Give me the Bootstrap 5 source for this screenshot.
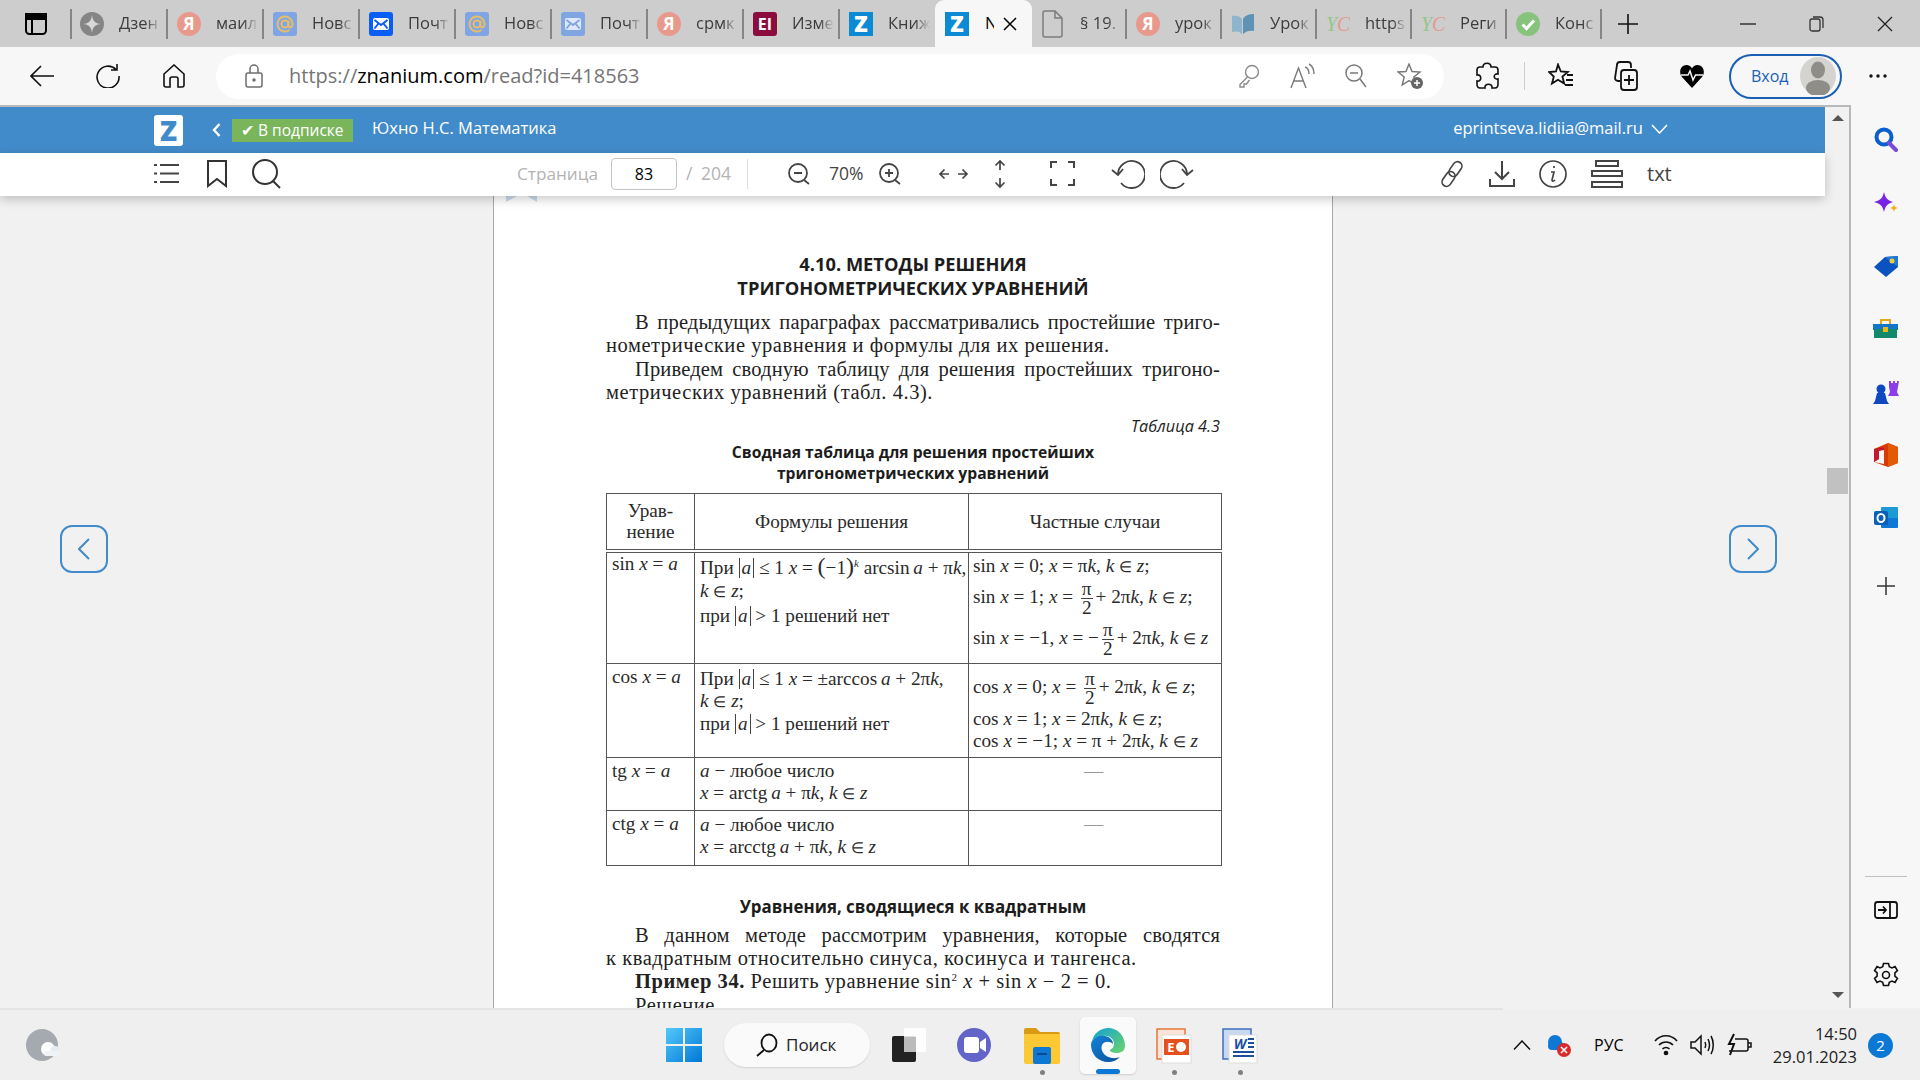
<!DOCTYPE html>
<html lang="ru">
<head>
  <meta charset="UTF-8" />
  <title>Znanium - Reader</title>
  <link href="https://cdn.jsdelivr.net/npm/bootstrap@5.3.0/dist/css/bootstrap.min.css" rel="stylesheet" />
  <style>
    html, body { height: 1080px; overflow: hidden; }
    body { font-family: "Open Sans", "Noto Sans", sans-serif; background: #f1f1f1; color: #000; }
    svg { display: block; flex: none; }
    .ml9{margin-left:9px}.ml11{margin-left:11px}.ml12{margin-left:12px}.ml14{margin-left:14px}.ml15{margin-left:15px}.ml16{margin-left:16px}.ml19{margin-left:19px}.ml20{margin-left:20px}.ml21{margin-left:21px}.ml22{margin-left:22px}.ml23{margin-left:23px}.ml24{margin-left:24px}.ml25{margin-left:25px}.ml26{margin-left:26px}.ml27{margin-left:27px}.ml29{margin-left:29px}.ml30{margin-left:30px}.ml31{margin-left:31px}.ml32{margin-left:32px}.ml36{margin-left:36px}.ml37{margin-left:37px}.ml40{margin-left:40px}.ml42{margin-left:42px}.ml43{margin-left:43px}.ml44{margin-left:44px}.ml52{margin-left:52px}.ml53{margin-left:53px}.ml102{margin-left:102px}.ml154{margin-left:154px}.ml235{margin-left:235px}.ml245{margin-left:245px}.ml255{margin-left:255px}.ml604{margin-left:604px}.mlclock{margin-left:-15px}

    /* browser chrome */
    .tabrow { height: 47px; background: #cdcdcd; }
    .tabcell { width: 96px; height: 30px; border-right: 2px solid #858585; padding-left: 9px; flex: none; }
    .tabcell.first { border-left: 2px solid #858585; width: 98px; padding-left: 8px; }
    .tabcell.nosep { border-right: 0; width: 95px; }
    .tabcell.after { width: 95px; }
    .tabtitle { width: 42px; margin-left: 15px; font-size: 16.5px; white-space: nowrap; overflow: hidden; color: #3c3c3c; -webkit-mask-image: linear-gradient(90deg, #000 65%, transparent); mask-image: linear-gradient(90deg, #000 65%, transparent); }
    .tabactive { width: 97px; height: 47px; background: #f7f7f7; border-radius: 9px 9px 0 0; padding-left: 10px; flex: none; }
    .tabactive .tabtitle { width: 9px; margin-left: 16px; color: #000; -webkit-mask-image: none; mask-image: none; }
    .addrbar { height: 58px; background: #f7f7f7; }
    .addrfield { width: 1228px; height: 45px; background: #fff; border-radius: 23px; }
    .urltext { font-size: 20px; color: #757575; }
    .urltext b { font-weight: 400; color: #000; }
    .sepline { width: 1px; height: 28px; background: #cfcfcf; }
    .loginpill { width: 113px; height: 45px; border: 2px solid #1a5fb4; border-radius: 23px; color: #1a5fb4; font-size: 16px; padding-left: 20px; }
    .mainrow { height: 903px; }
    .viewport { width: 1851px; border-top: 2px solid #b9b9b9; border-right: 2px solid #b9b9b9; background: #f1f1f1; }
    .readcol { width: 1825px; flex: none; }
    .bluebar { height: 46px; background: #428bca; color: #fff; padding-left: 154px; }
    .zlogo { width: 29px; height: 31px; background: #fff; border-radius: 3px; color: #428bca; font-weight: 800; font-size: 28px; line-height: 31px; text-align: center; }
    .subbadge { width: 121px; height: 23px; margin-left: 11px; background: #7ab55c; font-size: 15.5px; line-height: 22px; padding-left: 9px; white-space: nowrap; }
    .booktitle { margin-left: 19px; padding-bottom: 3px; font-size: 16.5px; white-space: nowrap; }
    .usermail { margin-left: auto; margin-right: 157px; padding-bottom: 3px; font-size: 16.5px; }
    .whitebar { height: 43px; padding-bottom: 2px; background: #fff; box-shadow: 0 3px 10px rgba(0,0,0,.22); position: relative; z-index: 2; }
    .pagelabel { width: 80px; color: #b3b3b3; font-size: 17.2px; white-space: nowrap; }
    .pagenum { width: 66px; height: 32px; border: 1px solid #c4c4c4; border-radius: 4px; font-size: 16px; text-align: center; line-height: 30px; }
    .pagetotal { width: 47px; color: #b3b3b3; font-size: 17.5px; white-space: nowrap; word-spacing: 4px; }
    .zoomval { width: 35px; color: #444; font-size: 17.5px; }
    .txtbtn { color: #444; font-size: 20px; }
    .vrule { width: 1px; height: 30px; background: #ddd; }
    .readbody { height: 812px; overflow: hidden; }
    .gutterl { width: 493px; padding: 329px 0 0 60px; flex: none; }
    .gutterr { width: 492px; padding: 329px 0 0 396px; flex: none; }
    .navarrow { width: 48px; height: 48px; border: 2px solid #428bca; border-radius: 12px; }
    .bookpage { width: 840px; background: #fff; border-left: 1px solid #a9a9a9; border-right: 1px solid #a9a9a9; flex: none; }
    .pagemark { margin-left: 12px; }
    .pagetext { padding: 50px 112px 0; font-family: "Liberation Serif", serif; color: #222; font-size: 20.5px; }
    .sectitle { font-family: "Open Sans", sans-serif; font-weight: 700; font-size: 18.3px; line-height: 23.5px; text-align: center; color: #1c1c1c; white-space: nowrap; }
    .para { margin-top: 12px; }
    .ln { line-height: 23.4px; white-space: nowrap; letter-spacing: .55px; }
    .ln.ind { padding-left: 29px; }
    .ln.full { white-space: normal; letter-spacing: .15px; text-align: justify; text-align-last: justify; }
    .tblno { margin-top: 11px; text-align: right; font-family: "Open Sans", sans-serif; font-style: italic; font-size: 16.2px; line-height: 20px; }
    .tblcap { margin-top: 6px; font-family: "Open Sans", sans-serif; font-weight: 700; font-size: 15.7px; line-height: 21.5px; text-align: center; color: #1c1c1c; }

    /* table from the book */
    .booktbl { width: 615px; margin: 8px 0 0; table-layout: fixed; border-collapse: collapse; font-size: 19.2px; --bs-table-color: #2a2a2a; }
    .booktbl td { padding: 4px 2px 0 5px; vertical-align: top; border: 1.5px solid #555; line-height: 22px; white-space: nowrap; }
    .colone { width: 88px; } .coltwo { width: 274px; } .colthree { width: 253px; }
    .booktbl tr.head td { height: 58px; padding: 0; text-align: center; vertical-align: middle; border-bottom: 4px double #555; line-height: 21px; }
    .booktbl tr.rsin td { height: 112px; } .booktbl tr.rcos td { height: 94px; } .booktbl tr.rtg td { height: 53px; } .booktbl tr.rctg td { height: 55px; }
    .booktbl td.eqn { padding-top: 2px; padding-left: 5px; }
    .booktbl tr.rsin td.eqn { padding-top: 0; }
    .booktbl tr.rtg td.frm { padding-top: 2px; }
    .booktbl tr.rctg td.frm { padding-top: 3px; }
    .booktbl td.dash { text-align: center; color: #999; padding: 2px 3px 0 0; }
    .booktbl tr.rsin td.frm { padding-top: 3px; line-height: 23px; }
    .booktbl td.cases { padding-left: 4px; padding-top: 1px; }
    .fl { height: 40px; display: flex; align-items: center; }
    .fl.one { height: 24px; } .fl.two { height: 42px; } .fl.three { height: 44px; padding-top: 3px; } .fl.plain { height: 22px; }
    .fr { display: inline-flex; flex-direction: column; align-items: center; vertical-align: middle; line-height: 18px; margin: 0 3px; }
    .fr span:first-child { border-bottom: 1.5px solid #444; padding: 0 1px; }
    .absv { display: inline-block; line-height: 20px; border-left: 1.5px solid #444; border-right: 1.5px solid #444; padding: 0 2px; }
    .pwr { font-size: 11px; vertical-align: 7px; line-height: 0; }
    .bigp { font-size: 24px; line-height: 0; font-weight: 300; }
    .elem { font-size: .78em; }
    .subsec { margin-top: 29px; font-family: "Open Sans", sans-serif; font-weight: 700; font-size: 16.9px; line-height: 24px; text-align: center; color: #1c1c1c; }
    .para.after { margin-top: 5px; }
    .scrollcol { width: 24px; flex: none; padding-left: 2px; }
    .scrollthumb { width: 21px; height: 26px; background: #c1c1c1; margin: 347px 0 0 0; }
    .scrollgap { height: 498px; }
    .sidebarcol { width: 69px; background: #f7f7f7; padding-top: 22px; }
    .sideitem { margin-bottom: 37px; }
    .sideplus { margin: 9px 0 37px; }
    .sidesep { width: 42px; height: 1px; background: #c0c0c0; margin: 244px 0 23px; }
    .sidepanel { margin-bottom: 42px; }
    .taskstrip { width: 1503px; height: 2px; background: #e4e4e4; }
    .taskbar { height: 70px; background: #efefef; }
    .searchpill { width: 146px; height: 44px; border-radius: 22px; background: #fafafa; box-shadow: 0 1px 2px rgba(0,0,0,.12); font-size: 17px; padding-left: 32px; gap: 8px; color: #222; }
    .edgebox { width: 56px; height: 57px; background: #fafafa; border-radius: 5px; box-shadow: 0 1px 2px rgba(0,0,0,.14); padding: 10px 0 0 10px; }
    .edgeline { width: 24px; height: 5px; border-radius: 3px; background: #0a78d4; margin: 6px 0 0 6px; }
    .dotrun { width: 5px; height: 5px; border-radius: 50%; background: #808080; margin: 6px auto 0; }
    .appslot { width: 36px; padding-top: 12px; }
    .traylang { font-size: 16px; width: 30px; white-space: nowrap; }
    .trayclock { width: 120px; font-size: 16.5px; line-height: 23px; text-align: right; color: #222; }
    .notifdot { width: 25px; height: 25px; border-radius: 50%; background: #0a78d4; color: #fff; font-size: 15px; text-align: center; line-height: 25px; }
  </style>
</head>
<body>
  <!-- shared tab icons -->
  <svg width="0" height="0" class="d-none">
    <symbol id="fav-ya" viewBox="0 0 24 24"><circle cx="12" cy="12" r="12" fill="#e8998c"/><text x="12" y="18" font-size="17" font-weight="700" text-anchor="middle" fill="#fff" font-family="Open Sans">Я</text></symbol>
    <symbol id="fav-at" viewBox="0 0 24 24"><rect width="24" height="24" rx="3" fill="#7fa6e2"/><circle cx="12" cy="12" r="3.5" fill="none" stroke="#e6bd6d" stroke-width="2"/><path d="M15.5 8.500v5c0 3 4 2.500 4-1.500a7.500 7.500 0 1 0-3 6" fill="none" stroke="#e6bd6d" stroke-width="2"/></symbol>
    <symbol id="fav-mail" viewBox="0 0 24 24"><rect width="24" height="24" rx="3" fill="#0a5ef5"/><rect x="4" y="6" width="16" height="12" rx="2" fill="#fff"/><path d="M5.500 8 12 13l6.500-5M5.500 16.500l4-5M18.500 16.500l-4-5" fill="none" stroke="#0a5ef5" stroke-width="2"/></symbol>
    <symbol id="fav-mail2" viewBox="0 0 24 24"><rect width="24" height="24" rx="3" fill="#7fa6e2"/><rect x="4" y="6" width="16" height="12" rx="2" fill="#dfe8f8"/><path d="M5.500 8 12 13l6.500-5M5.500 16.500l4-5M18.500 16.500l-4-5" fill="none" stroke="#7fa6e2" stroke-width="2"/></symbol>
    <symbol id="fav-z" viewBox="0 0 24 24"><rect width="24" height="24" fill="#0c8bd4"/><text x="12" y="20" font-size="22" font-weight="800" text-anchor="middle" fill="#fff" font-family="Open Sans">Z</text></symbol>
    <symbol id="fav-yc" viewBox="0 0 24 24"><text x="0" y="19" font-size="20" font-style="italic" fill="#94c48c" font-family="Liberation Serif">Y</text><text x="11" y="19" font-size="20" font-style="italic" fill="#e49a90" font-family="Liberation Serif">C</text></symbol>
  </svg>

  <!-- tab strip -->
  <div class="tabrow d-flex align-items-center">
    <svg class="ml25" width="22" height="22" viewBox="0 0 22 22" fill="none" stroke="#000" stroke-width="2"><rect x="1" y="1" width="20" height="20" rx="3.500"/><path d="M1 6h20M7 6v15"/><path d="M1 1h20v5H1z" fill="#000"/></svg>
    <div class="tabcell first ml23 d-flex align-items-center">
      <svg width="24" height="24" viewBox="0 0 24 24"><circle cx="12" cy="12" r="12" fill="#858585"/><path d="M12 3c.6 6 3 8.400 9 9-6 .6-8.400 3-9 9-.6-6-3-8.400-9-9 6-.6 8.400-3 9-9z" fill="#d8d8d8"/></svg>
      <span class="tabtitle">Дзен</span>
    </div>
    <div class="tabcell d-flex align-items-center"><svg width="24" height="24"><use href="#fav-ya"/></svg><span class="tabtitle">маил</span></div>
    <div class="tabcell d-flex align-items-center"><svg width="24" height="24"><use href="#fav-at"/></svg><span class="tabtitle">Новс</span></div>
    <div class="tabcell d-flex align-items-center"><svg width="24" height="24"><use href="#fav-mail"/></svg><span class="tabtitle">Почт</span></div>
    <div class="tabcell d-flex align-items-center"><svg width="24" height="24"><use href="#fav-at"/></svg><span class="tabtitle">Новс</span></div>
    <div class="tabcell d-flex align-items-center"><svg width="24" height="24"><use href="#fav-mail2"/></svg><span class="tabtitle">Почт</span></div>
    <div class="tabcell d-flex align-items-center"><svg width="24" height="24"><use href="#fav-ya"/></svg><span class="tabtitle">срмк</span></div>
    <div class="tabcell d-flex align-items-center">
      <svg width="24" height="24" viewBox="0 0 24 24"><rect width="24" height="24" rx="3" fill="#8a0d3e"/><text x="12" y="18" font-size="16" font-weight="700" text-anchor="middle" fill="#fff" font-family="Open Sans">EI</text></svg>
      <span class="tabtitle">Изме</span>
    </div>
    <div class="tabcell nosep d-flex align-items-center"><svg width="24" height="24"><use href="#fav-z"/></svg><span class="tabtitle">Книж</span></div>
    <div class="tabactive d-flex align-items-center">
      <svg width="24" height="24"><use href="#fav-z"/></svg>
      <span class="tabtitle">N</span>
      <svg class="ml9" width="14" height="14" viewBox="0 0 14 14" stroke="#000" stroke-width="1.500"><path d="M1 1l12 12M13 1 1 13"/></svg>
    </div>
    <div class="tabcell after d-flex align-items-center">
      <svg width="24" height="28" viewBox="0 0 24 28" fill="none" stroke="#7c7c7c" stroke-width="1.500"><path d="M4 1h10l7 7v17a2 2 0 0 1-2 2H4a2 2 0 0 1-2-2V3a2 2 0 0 1 2-2zM14 1v7h7"/></svg>
      <span class="tabtitle">§ 19.</span>
    </div>
    <div class="tabcell after d-flex align-items-center"><svg width="24" height="24"><use href="#fav-ya"/></svg><span class="tabtitle">урок</span></div>
    <div class="tabcell after d-flex align-items-center">
      <svg width="24" height="24" viewBox="0 0 24 24"><path d="M1 4c4-1 8 0 10 3v15c-3-3-6-3-10-2z" fill="#8fb4cd"/><path d="M23 2c-4 0-9 1-11 5v15c3-3 7-4 11-3z" fill="#5f93b5"/></svg>
      <span class="tabtitle">Урок</span>
    </div>
    <div class="tabcell after d-flex align-items-center"><svg width="24" height="24"><use href="#fav-yc"/></svg><span class="tabtitle">https</span></div>
    <div class="tabcell after d-flex align-items-center"><svg width="24" height="24"><use href="#fav-yc"/></svg><span class="tabtitle">Реги</span></div>
    <div class="tabcell after d-flex align-items-center">
      <svg width="24" height="24" viewBox="0 0 24 24"><circle cx="12" cy="12" r="12" fill="#88c37d"/><path d="M6.500 12.500l4 4 7.500-8" fill="none" stroke="#fff" stroke-width="3"/></svg>
      <span class="tabtitle">Конс</span>
    </div>
    <svg class="ml16" width="20" height="20" viewBox="0 0 20 20" stroke="#111" stroke-width="1.600"><path d="M10 0v20M0 10h20"/></svg>
    <svg class="ml102" width="16" height="2" viewBox="0 0 16 2" stroke="#333" stroke-width="1.500"><path d="M0 1h16"/></svg>
    <svg class="ml53" width="16" height="16" viewBox="0 0 16 16" fill="none" stroke="#333" stroke-width="1.300"><rect x="1" y="3" width="10" height="12" rx="2"/><path d="M4 1h7a3 3 0 0 1 3 3v8"/></svg>
    <svg class="ml52" width="16" height="16" viewBox="0 0 16 16" stroke="#222" stroke-width="1.300"><path d="M1 1l14 14M15 1 1 15"/></svg>
  </div>

  <!-- address bar -->
  <div class="addrbar d-flex align-items-center">
    <svg class="ml30" width="24" height="22" viewBox="0 0 24 22" fill="none" stroke="#111" stroke-width="1.600"><path d="M24 11H1M11 1 1 11l10 10"/></svg>
    <svg class="ml42" width="24" height="24" viewBox="0 0 24 24" fill="none" stroke="#111" stroke-width="1.600"><path d="M20 5.500A11 11 0 1 0 23 12M21 0v6h-6"/></svg>
    <svg class="ml43" width="22" height="24" viewBox="0 0 22 24" fill="none" stroke="#111" stroke-width="1.600"><path d="M1 10 11 1l10 9v11a2 2 0 0 1-2 2h-4v-8a2 2 0 0 0-2-2H9a2 2 0 0 0-2 2v8H3a2 2 0 0 1-2-2z"/></svg>
    <div class="addrfield ml31 d-flex align-items-center">
      <svg class="ml29" width="18" height="24" viewBox="0 0 18 24" fill="none" stroke="#6d6d6d" stroke-width="1.500"><rect x="1" y="9" width="16" height="14" rx="2"/><path d="M5 9V5a4 4 0 0 1 8 0v4"/><circle cx="9" cy="16" r="1" fill="#6d6d6d"/></svg>
      <span class="urltext ml26">https://<b>znanium.com</b>/read?id=418563</span>
      <svg class="ms-auto" width="22" height="24" viewBox="0 0 22 24" fill="none" stroke="#8a8a8a" stroke-width="1.400"><circle cx="14" cy="8" r="6.500"/><path d="M9.500 13 2 20.500V23h4v-3h2.500l3-4"/></svg>
      <svg class="ml30" width="26" height="26" viewBox="0 0 26 26" fill="none" stroke="#7a7a7a" stroke-width="1.400"><path d="M1 25 8.500 5l7.500 20M4 18h9.500M15 4c3 1 4 4 4 7M19 1c4 2 5 6 5 10"/></svg>
      <svg class="ml29" width="22" height="24" viewBox="0 0 22 24" fill="none" stroke="#7a7a7a" stroke-width="1.500"><circle cx="9" cy="9" r="8"/><path d="M5 9h8M15 15l6 8"/></svg>
      <svg class="ml30" width="26" height="26" viewBox="0 0 26 26"><path d="M12 1l3 7.500 8 .5-6.200 5 2 8-6.800-4.400L5.200 22l2-8L1 9l8-.5z" fill="none" stroke="#777" stroke-width="1.400"/><circle cx="20" cy="20" r="6" fill="#666"/><path d="M20 17v6M17 20h6" stroke="#fff" stroke-width="1.500"/></svg>
      <span class="ml21"></span>
    </div>
    <svg class="ml31" width="24" height="28" viewBox="0 0 24 28" fill="none" stroke="#111" stroke-width="1.600"><path d="M8 5c0-5 8-5 8 0h4c2 0 3 1 3 3v4c-5-1-5 6 0 5v5c0 2-1 4-3 4h-3c1-5-8-5-7 0H5c-2 0-3-2-3-4v-3c5 1 5-7 0-6V8c0-2 1-3 3-3z"/></svg>
    <div class="sepline ml25"></div>
    <svg class="ml23" width="26" height="26" viewBox="0 0 26 26" fill="none" stroke="#111" stroke-width="1.800"><path d="M10 1.500l2.800 7 7 .5-5.400 4.500 1.800 7-6.200-3.800-6 3.800 1.800-7L1 9l7-.5zM19 12h6M18 17h7M17 22h8"/></svg>
    <svg class="ml40" width="24" height="30" viewBox="0 0 24 30" fill="none" stroke="#111" stroke-width="1.800"><path d="M6 20H4a3 3 0 0 1-3-3L3 4a3 3 0 0 1 3-3h8a3 3 0 0 1 3 3v3"/><rect x="7" y="9" width="16" height="20" rx="3" fill="#f7f7f7"/><path d="M15 14v10M10 19h10"/></svg>
    <svg class="ml42" width="24" height="24" viewBox="0 0 24 24"><path d="M12 24 2 13C-2 8 1 1 6.500 1 9 1 11 2.500 12 4.500 13 2.500 15 1 17.500 1 23 1 26 8 22 13z" fill="#000"/><path d="M1 11h7l2-4 3 9 2.500-5H23" fill="none" stroke="#f7f7f7" stroke-width="1.500"/></svg>
    <div class="loginpill ml25 d-flex align-items-center justify-content-between">
      <span>Вход</span>
      <svg class="me-1" width="36" height="38" viewBox="0 0 36 38"><ellipse cx="18" cy="19" rx="18" ry="19" fill="#d4d3cf"/><ellipse cx="18" cy="13" rx="7" ry="8.500" fill="#8f8d88"/><ellipse cx="18" cy="31" rx="12" ry="8" fill="#8f8d88"/></svg>
    </div>
    <svg class="ml26" width="20" height="4" viewBox="0 0 20 4" fill="#111"><circle cx="3" cy="2" r="1.700"/><circle cx="10" cy="2" r="1.700"/><circle cx="17" cy="2" r="1.700"/></svg>
  </div>

  <div class="mainrow d-flex">
    <div class="viewport d-flex">
      <div class="readcol">
        <div class="bluebar d-flex align-items-center">
          <div class="zlogo">Z</div>
          <svg class="ml29" width="9" height="14" viewBox="0 0 9 14" fill="none" stroke="#fff" stroke-width="2.400"><path d="M7.500 1 2 7l5.500 6"/></svg>
          <div class="subbadge">✔ В подписке</div>
          <div class="booktitle">Юхно Н.С. Математика</div>
          <div class="usermail d-flex align-items-center gap-2">eprintseva.lidiia@mail.ru
            <svg width="17" height="10" viewBox="0 0 17 10" fill="none" stroke="#fff" stroke-width="1.500"><path d="m1 1 7.500 8L16 1"/></svg>
          </div>
        </div>

        <div class="whitebar d-flex align-items-center">
          <svg class="ml154" width="25" height="21" viewBox="0 0 25 21" stroke="#444" stroke-width="2"><path d="M0 2h3M6 2h19M0 10.500h3M6 10.500h19M0 19h3M6 19h19"/></svg>
          <svg class="ml27" width="22" height="28" viewBox="0 0 22 28" fill="none" stroke="#333" stroke-width="2"><path d="M2 1h18v25l-9-7-9 7z"/></svg>
          <svg class="ml24" width="30" height="30" viewBox="0 0 30 30" fill="none" stroke="#333" stroke-width="2"><circle cx="13" cy="13" r="12"/><path d="m21 22 7 7"/></svg>
          <span class="pagelabel ml235">Страница</span>
          <span class="pagenum ml14">83</span>
          <span class="pagetotal ml9">/ 204</span>
          <span class="vrule ml14"></span>
          <svg class="ml40" width="22" height="22" viewBox="0 0 22 22" fill="none" stroke="#444" stroke-width="1.800"><circle cx="10" cy="10" r="9"/><path d="M6 10h8M16 17l5 4"/></svg>
          <span class="zoomval ml19">70%</span>
          <svg class="ml15" width="22" height="22" viewBox="0 0 22 22" fill="none" stroke="#444" stroke-width="1.800"><circle cx="10" cy="10" r="9"/><path d="M6 10h8M10 6v8M16 17l5 4"/></svg>
          <svg class="ml37" width="31" height="12" viewBox="0 0 31 12" fill="none" stroke="#444" stroke-width="1.700"><path d="M11 6H2M6.500 1.500 2 6l4.500 4.500M20 6h9M24.500 1.500 29 6l-4.500 4.500"/></svg>
          <svg class="ml25" width="12" height="30" viewBox="0 0 12 30" fill="none" stroke="#444" stroke-width="1.700"><path d="M6 11V2M1.500 6.500 6 2l4.500 4.500M6 19v9M1.500 23.500 6 28l4.500-4.500"/></svg>
          <svg class="ml44" width="25" height="25" viewBox="0 0 25 25" fill="none" stroke="#444" stroke-width="2"><path d="M7 1H1v6M18 1h6v6M7 24H1v-6M18 24h6v-6"/></svg>
          <svg class="ml36" width="34" height="30" viewBox="0 0 34 30" fill="none" stroke="#444" stroke-width="1.800"><path d="M7 15A13.500 13.500 0 1 1 10 24M1 11l6 5 5-6"/></svg>
          <svg class="ml15" width="34" height="30" viewBox="0 0 34 30" fill="none" stroke="#444" stroke-width="1.800"><path d="M27 15A13.500 13.500 0 1 0 24 24M33 11l-6 5-5-6"/></svg>
          <svg class="ml245" width="26" height="28" viewBox="0 0 26 28" fill="none" stroke="#444" stroke-width="1.700"><g transform="rotate(35 13 14)"><rect x="8.500" y="0" width="9" height="16" rx="4.500"/><rect x="8.500" y="12" width="9" height="16" rx="4.500"/></g></svg>
          <svg class="ml24" width="26" height="26" viewBox="0 0 26 26" fill="none" stroke="#444" stroke-width="2"><path d="M13 0v18M6 11l7 7 7-7M1 18v7h24v-7"/></svg>
          <svg class="ml24" width="28" height="28" viewBox="0 0 28 28" fill="none" stroke="#444" stroke-width="1.700"><circle cx="14" cy="14" r="13"/><path d="M15 6v2M12 12h3l-2 8c0 1 1 2 3 0"/></svg>
          <svg class="ml24" width="32" height="28" viewBox="0 0 32 28" fill="#fff" stroke="#444" stroke-width="2"><rect x="5" y="1" width="22" height="5"/><rect x="1" y="11" width="30" height="5"/><rect x="1" y="22" width="30" height="5"/></svg>
          <span class="txtbtn ml24">txt</span>
        </div>

        <div class="readbody d-flex">
          <div class="gutterl">
            <div class="navarrow d-flex align-items-center justify-content-center">
              <svg width="12" height="22" viewBox="0 0 12 22" fill="none" stroke="#428bca" stroke-width="2"><path d="M11 1 1 11l10 10"/></svg>
            </div>
          </div>
          <div class="bookpage">
            <svg class="pagemark" width="31" height="6" viewBox="0 0 31 6" fill="#c9dbec"><path d="M0 0h11L0 6zM21 0h10v6z"/></svg>
            <div class="pagetext">
              <div class="sectitle">4.10. МЕТОДЫ РЕШЕНИЯ<br>ТРИГОНОМЕТРИЧЕСКИХ УРАВНЕНИЙ</div>
              <div class="para">
                <div class="ln ind full">В предыдущих параграфах рассматривались простейшие триго-</div>
                <div class="ln">нометрические уравнения и формулы для их решения.</div>
                <div class="ln ind full">Приведем сводную таблицу для решения простейших тригоно-</div>
                <div class="ln">метрических уравнений (табл. 4.3).</div>
              </div>
              <div class="tblno">Таблица 4.3</div>
              <div class="tblcap">Сводная таблица для решения простейших<br>тригонометрических уравнений</div>
              <table class="table table-bordered booktbl">
                <colgroup><col class="colone"><col class="coltwo"><col class="colthree"></colgroup>
                <tr class="head"><td>Урав-<br>нение</td><td>Формулы решения</td><td>Частные случаи</td></tr>
                <tr class="rsin">
                  <td class="eqn">sin <i>x</i> = <i>a</i></td>
                  <td class="frm">При <span class="absv"><i>a</i></span> ≤ 1 <i>x</i> = <span class="bigp">(</span>−1<span class="bigp">)</span><i class="pwr">k</i> arcsin&thinsp;<i>a</i> + π<i>k</i>,<br><i>k</i> <span class="elem">∈</span> <i>z</i>;<br>при <span class="absv"><i>a</i></span> &gt; 1 решений нет</td>
                  <td class="cases">
                    <div class="fl one"><span>sin <i>x</i> = 0; <i>x</i> = π<i>k</i>, <i>k</i> <span class="elem">∈</span> <i>z</i>;</span></div>
                    <div class="fl"><span>sin <i>x</i> = 1; <i>x</i> = <span class="fr"><span>π</span><span>2</span></span>+ 2π<i>k</i>, <i>k</i> <span class="elem">∈</span> <i>z</i>;</span></div>
                    <div class="fl two"><span>sin <i>x</i> = −1, <i>x</i> = −<span class="fr"><span>π</span><span>2</span></span>+ 2π<i>k</i>, <i>k</i> <span class="elem">∈</span> <i>z</i></span></div>
                  </td>
                </tr>
                <tr class="rcos">
                  <td class="eqn">cos <i>x</i> = <i>a</i></td>
                  <td>При <span class="absv"><i>a</i></span> ≤ 1 <i>x</i> = ±arccos&thinsp;<i>a</i> + 2π<i>k</i>,<br><i>k</i> <span class="elem">∈</span> <i>z</i>;<br>при <span class="absv"><i>a</i></span> &gt; 1 решений нет</td>
                  <td class="cases">
                    <div class="fl three"><span>cos <i>x</i> = 0; <i>x</i> = <span class="fr"><span>π</span><span>2</span></span>+ 2π<i>k</i>, <i>k</i> <span class="elem">∈</span> <i>z</i>;</span></div>
                    <div class="fl plain"><span>cos <i>x</i> = 1; <i>x</i> = 2π<i>k</i>, <i>k</i> <span class="elem">∈</span> <i>z</i>;</span></div>
                    <div class="fl plain"><span>cos <i>x</i> = −1; <i>x</i> = π + 2π<i>k</i>, <i>k</i> <span class="elem">∈</span> <i>z</i></span></div>
                  </td>
                </tr>
                <tr class="rtg">
                  <td class="eqn">tg <i>x</i> = <i>a</i></td>
                  <td class="frm"><i>a</i> − любое число<br><i>x</i> = arctg&thinsp;<i>a</i> + π<i>k</i>, <i>k</i> <span class="elem">∈</span> <i>z</i></td>
                  <td class="dash">—</td>
                </tr>
                <tr class="rctg">
                  <td class="eqn">ctg <i>x</i> = <i>a</i></td>
                  <td class="frm"><i>a</i> − любое число<br><i>x</i> = arcctg&thinsp;<i>a</i> + π<i>k</i>, <i>k</i> <span class="elem">∈</span> <i>z</i></td>
                  <td class="dash">—</td>
                </tr>
              </table>
              <div class="subsec">Уравнения, сводящиеся к квадратным</div>
              <div class="para after">
                <div class="ln ind full">В данном методе рассмотрим уравнения, которые сводятся</div>
                <div class="ln">к квадратным относительно синуса, косинуса и тангенса.</div>
                <div class="ln ind"><b>Пример 34.</b> Решить уравнение sin<span class="pwr">2</span> <i>x</i> + sin <i>x</i> − 2 = 0.</div>
                <div class="ln ind">Решение.</div>
              </div>
            </div>
          </div>
          <div class="gutterr">
            <div class="navarrow d-flex align-items-center justify-content-center">
              <svg width="12" height="22" viewBox="0 0 12 22" fill="none" stroke="#428bca" stroke-width="2"><path d="M1 1l10 10L1 21"/></svg>
            </div>
          </div>
        </div>
      </div>
      <div class="scrollcol">
        <svg class="mx-auto mt-2" width="12" height="6" viewBox="0 0 12 6" fill="#555"><path d="M6 0l6 6H0z"/></svg>
        <div class="scrollthumb"></div>
        <div class="scrollgap"></div>
        <svg class="mx-auto" width="12" height="6" viewBox="0 0 12 6" fill="#555"><path d="M6 6l6-6H0z"/></svg>
      </div>
    </div>

    <!-- edge sidebar -->
    <div class="sidebarcol d-flex flex-column align-items-center">
      <svg class="sideitem" width="24" height="26" viewBox="0 0 24 26" fill="none"><circle cx="10" cy="10" r="7.500" stroke="#0a5fd0" stroke-width="4"/><path d="m15 16 7 7" stroke="#7a4ad8" stroke-width="4" stroke-linecap="round"/></svg>
      <svg class="sideitem" width="26" height="26" viewBox="0 0 26 26"><path d="M11 2c1.400 6 3 8 9 10-6 2-7.600 4-9 10-1.400-6-3-8-10-10 7-2 8.600-4 10-10z" fill="#7a22e6"/><path d="M21 14c.4 2.400 1 3 4 4-3 1-3.600 1.600-4 4-.4-2.400-1-3-4-4 3-1 3.600-1.600 4-4z" fill="#f2b416"/></svg>
      <svg class="sideitem" width="26" height="26" viewBox="0 0 26 26"><path d="M1 14 12 4l13-1v11L13 24z" fill="#0a52c0"/><path d="M12 4l13-1v11z" fill="#1d7ad6"/><circle cx="19" cy="8" r="2.500" fill="#f6c93a"/></svg>
      <svg class="sideitem" width="27" height="26" viewBox="0 0 27 26"><path d="M9 8V4h9v4" fill="none" stroke="#e6a817" stroke-width="2"/><rect x="1" y="8" width="25" height="6" fill="#1476c8"/><rect x="2" y="13" width="23" height="9" fill="#13896b"/><rect x="11" y="11" width="5" height="5" fill="#f3b41c"/></svg>
      <svg class="sideitem" width="28" height="26" viewBox="0 0 28 26"><circle cx="9" cy="10" r="4.500" fill="#0f49c0"/><path d="M5 14h8l2 8 2 3H1l2-3z" fill="#0f49c0"/><path d="M17 2h2v2h2V2h2v2h2V2h2l-1 6-1 5 2 4H16l2-4-1-5z" fill="#8b3fe8"/></svg>
      <svg class="sideitem" width="26" height="26" viewBox="0 0 26 26"><path d="M1 7 15 1l10 4v16l-10 4L1 20l10 2V5L6 8v9l-5 3z" fill="#d83b01"/><path d="M1 7l10-2v3L6 9v8l-5 3z" fill="#c4192a"/><path d="M15 1l10 4v16l-10 4z" fill="#e35a06"/></svg>
      <svg class="sideitem" width="26" height="26" viewBox="0 0 26 26"><rect x="8" y="2" width="17" height="18" rx="1" fill="#1c9ad6"/><path d="M8 13l17 0v9a1 1 0 0 1-1 1H9a1 1 0 0 1-1-1z" fill="#0f78d4"/><rect x="1" y="6" width="14" height="14" rx="2" fill="#0a5fb8"/><ellipse cx="8" cy="13" rx="3.500" ry="4" fill="none" stroke="#fff" stroke-width="2"/></svg>
      <svg class="sideplus" width="18" height="18" viewBox="0 0 18 18" stroke="#333" stroke-width="1.500"><path d="M9 0v18M0 9h18"/></svg>
      <div class="sidesep"></div>
      <svg class="sidepanel" width="24" height="20" viewBox="0 0 24 20" fill="none" stroke="#111" stroke-width="1.800"><rect x="1" y="2" width="22" height="16" rx="2.500"/><path d="M16 2v16M4 10h8M9 6.500 12 10l-3 3.500"/></svg>
      <svg width="26" height="26" viewBox="0 0 26 26" fill="none" stroke="#111" stroke-width="1.600"><circle cx="13" cy="13" r="3.500"/><path d="M10.500 1.500h5l.8 3.200 2.700 1.200 3-1.400 2.400 4.100-2.500 2.200v3.400l2.500 2.200-2.400 4.100-3-1.400-2.700 1.200-.8 3.200h-5l-.8-3.200-2.700-1.200-3 1.400L1.600 16.400l2.500-2.200v-3.400L1.600 8.600 4 4.500l3 1.400 2.700-1.200z"/></svg>
    </div>
  </div>

  <!-- windows taskbar -->
  <div class="taskstrip"></div>
  <div class="taskbar d-flex align-items-center">
    <svg class="ml26" width="36" height="34" viewBox="0 0 36 34"><ellipse cx="16" cy="17" rx="16" ry="16" fill="#a4aab0"/><circle cx="22" cy="21" r="7" fill="#fff"/><circle cx="29" cy="23" r="5" fill="#e6edf2"/><rect x="18" y="23" width="16" height="5" rx="2.500" fill="#eef3f6"/></svg>
    <svg class="ml604" width="36" height="36" viewBox="0 0 36 36"><defs><linearGradient id="winBlue" x1="0" y1="0" x2="1" y2="1"><stop offset="0" stop-color="#53c8fb"/><stop offset="1" stop-color="#0078d4"/></linearGradient></defs><path d="M0 1h17v16H0zM19 1h17v16H19zM0 19h17v16H0zM19 19h17v16H19z" fill="url(#winBlue)"/></svg>
    <div class="searchpill ml22 d-flex align-items-center">
      <svg width="22" height="24" viewBox="0 0 22 24" fill="none" stroke="#111" stroke-width="1.800"><ellipse cx="13" cy="10" rx="7.500" ry="8.500"/><path d="M8 17 1 23"/></svg>
      <span>Поиск</span>
    </div>
    <svg class="ml21" width="36" height="36" viewBox="0 0 36 36"><rect x="1" y="9" width="24" height="26" rx="2" fill="#222"/><rect x="13" y="1" width="22" height="24" rx="1" fill="#fff" opacity=".85"/><rect x="13" y="10" width="12" height="15" fill="#bbb"/></svg>
    <svg class="ml29" width="36" height="36" viewBox="0 0 36 36"><circle cx="18" cy="18" r="17" fill="#6264c9"/><rect x="8" y="10" width="15" height="16" rx="3" fill="#fff"/><path d="M24 15l6-4v14l-6-4z" fill="#fff"/></svg>
    <div class="ml32 appslot">
      <svg width="36" height="36" viewBox="0 0 36 36"><path d="M0 2a2 2 0 0 1 2-2h10l4 4h18a2 2 0 0 1 2 2v2H0z" fill="#d99a16"/><path d="M0 6h36v28a2 2 0 0 1-2 2H2a2 2 0 0 1-2-2z" fill="#fcc934"/><rect x="9" y="19" width="18" height="17" rx="2" fill="#0f78d4"/><path d="M13 26h10" stroke="#064b8c" stroke-width="2"/></svg>
      <div class="dotrun"></div>
    </div>
    <div class="edgebox ml20">
      <svg width="36" height="36" viewBox="0 0 36 36"><defs><linearGradient id="edgeTop" x1="0" y1="0" x2="1" y2="1"><stop offset="0" stop-color="#0fa3d4"/><stop offset="1" stop-color="#6ed46a"/></linearGradient><linearGradient id="edgeLow" x1="0" y1="0" x2="1" y2="1"><stop offset="0" stop-color="#1583d8"/><stop offset="1" stop-color="#0a4f9a"/></linearGradient></defs><path d="M2 14C4 6 11 1 18 1c10 0 17 8 17 18 0 5-4 7-8 7s-7-1-7-3c1-1 4-2 4-6 0-6-6-9-11-8C8 10 3 12 2 14z" fill="url(#edgeTop)"/><path d="M2 14c3-4 8-6 13-5 5 1 8 4 8 8-3-3-9-3-11 1-2 5 2 12 10 13 3 .4 6 0 8-1-3 3-7 5-12 5C8 35 1 27 1 18c0-1 .4-3 1-4z" fill="url(#edgeLow)"/></svg>
      <div class="edgeline"></div>
    </div>
    <div class="ml20 appslot">
      <svg width="36" height="36" viewBox="0 0 36 36"><rect x="1" y="1" width="28" height="30" fill="#fbe3d6" stroke="#e8763c" stroke-width="1.500"/><rect x="6" y="7" width="29" height="28" fill="#fff" stroke="#ddd"/><rect x="8" y="11" width="25" height="16" fill="#e5501d"/><text x="15" y="24" font-size="13" font-weight="700" fill="#fff" font-family="Open Sans" text-anchor="middle">E</text><circle cx="25" cy="19" r="5" fill="#fff"/></svg>
      <div class="dotrun"></div>
    </div>
    <div class="ml30 appslot">
      <svg width="36" height="36" viewBox="0 0 36 36"><rect x="1" y="1" width="28" height="30" fill="#c7d8f1" stroke="#3f6fc0" stroke-width="1.500"/><rect x="7" y="7" width="28" height="28" fill="#fff" stroke="#ddd"/><text x="18" y="21" font-size="14" font-weight="700" font-style="italic" fill="#1d4f9f" font-family="Open Sans" text-anchor="middle">W</text><path d="M26 11h6M26 15h6M26 19h6M11 24h21M11 28h21" stroke="#1d4f9f" stroke-width="2"/></svg>
      <div class="dotrun"></div>
    </div>
    <svg class="ml255" width="18" height="10" viewBox="0 0 18 10" fill="none" stroke="#111" stroke-width="1.500"><path d="m1 9.500 8-8.500 8 8.500"/></svg>
    <svg class="ml15" width="26" height="26" viewBox="0 0 26 26"><circle cx="9" cy="10" r="7" fill="#0f78d4"/><rect x="2" y="10" width="16" height="8" rx="4" fill="#0f78d4"/><circle cx="18" cy="18" r="7" fill="#d92b2b"/><path d="m15 15 6 6M21 15l-6 6" stroke="#fff" stroke-width="1.600"/></svg>
    <span class="traylang ml22">РУС</span>
    <svg class="ml30" width="24" height="22" viewBox="0 0 24 22" fill="none" stroke="#111" stroke-width="1.700"><path d="M1 7c6-7 16-7 22 0M5 11c4-4 10-4 14 0M8.500 15c2-2 5-2 7 0"/><circle cx="12" cy="19" r="1.500" fill="#111"/></svg>
    <svg class="ml12" width="24" height="24" viewBox="0 0 24 24" fill="none" stroke="#111" stroke-width="1.500"><path d="M1 9h4l6-6v18l-6-6H1zM15 9c1 2 1 4 0 6M18 6c2 4 2 8 0 12M21 3c3 5 3 13 0 18"/></svg>
    <svg class="ml12" width="26" height="24" viewBox="0 0 26 24" fill="none" stroke="#111" stroke-width="1.500"><path d="M9 6h11a2 2 0 0 1 2 2v8a2 2 0 0 1-2 2H3M22 10h3v4h-3"/><path d="M8 1 3 11h5l-4 11" stroke-width="2"/></svg>
    <div class="trayclock mlclock">14:50<br>29.01.2023</div>
    <div class="notifdot ml11">2</div>
  </div>

  <script src="https://cdn.jsdelivr.net/npm/bootstrap@5.3.0/dist/js/bootstrap.bundle.min.js"></script>
</body>
</html>
